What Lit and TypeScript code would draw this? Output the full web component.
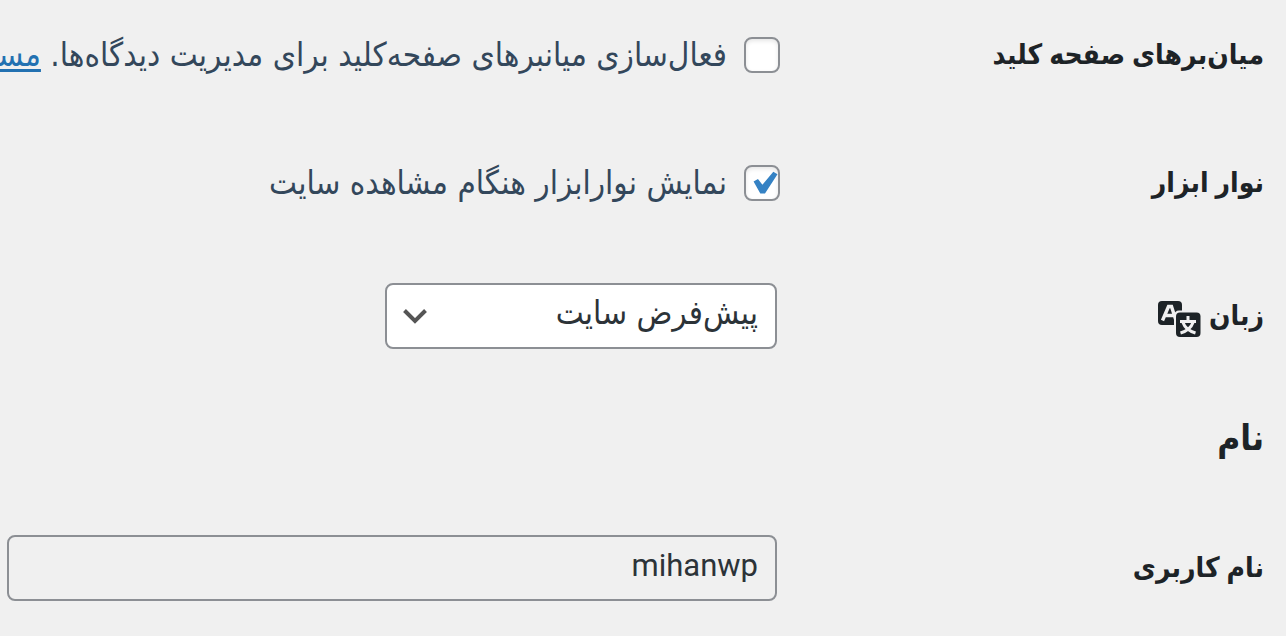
import { LitElement, html, css } from "lit";
import { customElement } from "lit/decorators.js";

@customElement("app-root")
export class AppRoot extends LitElement {
  static styles = css`
    :host {
      display: block;
      min-height: 100vh;
      box-sizing: border-box;
      overflow: hidden;
      background: #f0f0f0;
      color: #1d2327;
      font-family: "DejaVu Sans Condensed", "DejaVu Sans", sans-serif;
      font-size: 33px;
      line-height: 40px;
    }
    * {
      box-sizing: border-box;
    }
    form {
      padding: 22px 22px 32px 7px;
    }
    .options {
      display: grid;
      gap: 62px;
      margin-bottom: 67px;
    }
    .row {
      display: grid;
      grid-template-columns: 484px minmax(0, 1fr);
      align-items: center;
      min-height: 66px;
    }
    .name {
      display: flex;
      align-items: center;
      gap: 8px;
      font-family: Roboto, "DejaVu Sans Condensed", "DejaVu Sans", sans-serif;
      font-size: 28px;
      font-weight: 700;
    }
    .name svg {
      width: 44px;
      height: 38px;
      margin-top: 6px;
    }
    .check {
      display: flex;
      align-items: center;
      gap: 17px;
      color: #33475b;
      white-space: nowrap;
    }
    .check input {
      appearance: none;
      flex: none;
      display: grid;
      width: 36px;
      height: 36px;
      margin: 0;
      border: 2px solid #8c8f94;
      border-radius: 8px;
      background: #fff;
      box-shadow: inset 0 2px 4px rgb(0 0 0 / 10%);
    }
    .check input:checked::before {
      content: "";
      width: 26px;
      height: 24px;
      place-self: center start;
      background: #3582c4;
      clip-path: polygon(6% 44%, 23% 33%, 40% 57%, 82% 3%, 98% 14%, 50% 94%, 32% 94%);
    }
    a {
      color: #2271b1;
      text-decoration-thickness: 3px;
      text-underline-offset: 3px;
    }
    .field {
      margin-inline-start: 3px;
    }
    .picker {
      display: grid;
      align-items: center;
      width: 392px;
    }
    .picker > * {
      grid-area: 1 / 1;
    }
    .picker svg {
      width: 26px;
      height: 18px;
      justify-self: end;
      margin-inline-end: 17px;
      pointer-events: none;
    }
    select,
    .text {
      appearance: none;
      width: 100%;
      height: 66px;
      margin: 0;
      padding: 0 17px 6px;
      border: 2px solid #8c8f94;
      border-radius: 8px;
      background: #fff;
      color: #2c3338;
      font: inherit;
    }
    .text {
      background: #f0f0f0;
      font-family: Roboto, sans-serif;
      font-size: 31px;
    }
    h2 {
      margin: 56px 0 64px;
      font-size: 35px;
      line-height: 66px;
      font-weight: 700;
    }
  `;

  render() {
    return html`
      <form dir="rtl" lang="fa">
        <div class="options">
          <div class="row">
            <span class="name">میان‌برهای صفحه کلید</span>
            <label class="check">
              <input type="checkbox" />
              <span>فعال‌سازی میانبرهای صفحه‌کلید برای مدیریت دیدگاه‌ها. <a href="#">مستندات</a></span>
            </label>
          </div>
          <div class="row">
            <span class="name">نوار ابزار</span>
            <label class="check">
              <input type="checkbox" checked />
              <span>نمایش نوارابزار هنگام مشاهده سایت</span>
            </label>
          </div>
        </div>
        <div class="row">
          <label class="name" for="locale">
            زبان
            <svg viewBox="0 0 44 38" aria-hidden="true">
              <rect x="1" y="1" width="24" height="24" rx="4" fill="#1d2327" />
              <path d="M5.500 20.500 11.500 6.500h3L19 20.500M8 15.500h9" fill="none" stroke="#f0f0f0" stroke-width="3.400" />
              <rect x="17" y="10.500" width="27.500" height="28" rx="5" fill="#f0f0f0" />
              <rect x="19" y="12.500" width="24.500" height="24.500" rx="4" fill="#1d2327" />
              <path d="M31 16v5M23 21.500h16M26 22.500c2 6 6 8.500 12.500 10.500M36 22.500c-2 6-6 8.500-12.500 10.500" fill="none" stroke="#f0f0f0" stroke-width="3" />
            </svg>
          </label>
          <div class="field picker">
            <select id="locale">
              <option>پیش‌فرض سایت</option>
            </select>
            <svg viewBox="0 0 26 18" aria-hidden="true">
              <path d="m2.500 3.500 10.500 10.500L23.500 3.500" fill="none" stroke="#555" stroke-width="4" />
            </svg>
          </div>
        </div>
        <h2>نام</h2>
        <div class="row">
          <label class="name" for="username">نام کاربری</label>
          <div class="field">
            <input class="text" id="username" type="text" value="mihanwp" readonly />
          </div>
        </div>
      </form>
    `;
  }
}
